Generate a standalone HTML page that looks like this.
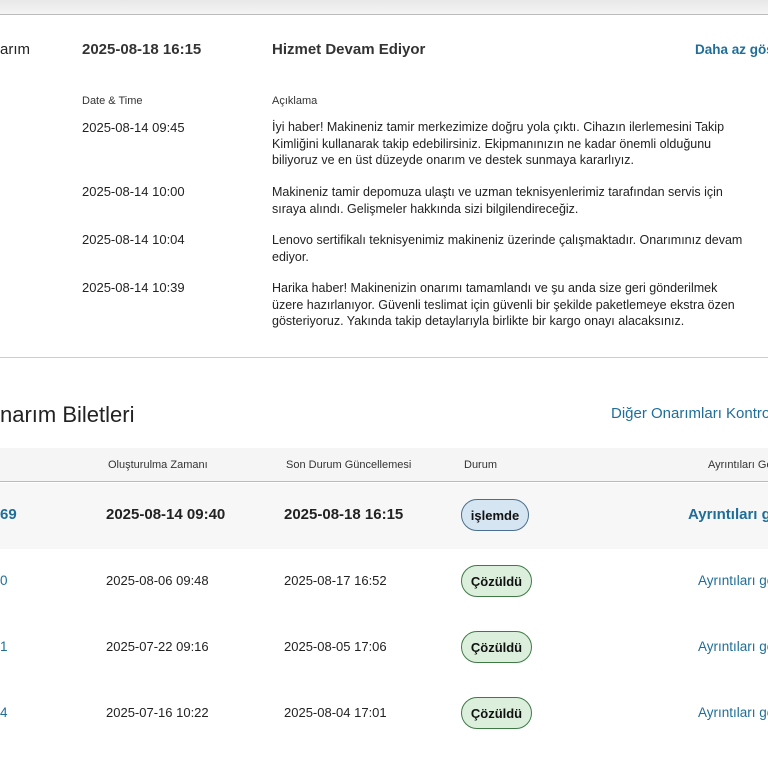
<!DOCTYPE html>
<html><head><meta charset="utf-8"><style>
*{margin:0;padding:0;box-sizing:border-box}
body{width:768px;height:768px;overflow:hidden;background:#fff;font-family:"Liberation Sans",sans-serif;color:#222;position:relative}
.a{position:absolute;white-space:nowrap}
.top{position:absolute;left:0;top:0;width:768px;height:15px;background:linear-gradient(#e8e8e8,#f4f4f4);border-bottom:1px solid #bbb}
.t13{font-size:13px;line-height:16px}
.sm{font-size:11px;color:#333}
.desc{position:absolute;left:272px;width:465px;font-size:12.5px;line-height:16.5px;color:#222;white-space:normal}
.link{color:#1f6e99}
.hr{position:absolute;left:0;width:768px;height:1px;background:#ccc}
.pill{position:absolute;height:32px;border-radius:16px;font-size:13px;font-weight:bold;display:flex;align-items:center;justify-content:center;color:#111}
</style></head><body>
<div class="top"></div>
<div class="a" style="left:0;top:41px;font-size:15px">arım</div>
<div class="a" style="left:82px;top:41px;font-size:15px;font-weight:bold;color:#333">2025-08-18 16:15</div>
<div class="a" style="left:272px;top:41px;font-size:15px;font-weight:bold;color:#333">Hizmet Devam Ediyor</div>
<div class="a link" style="left:695px;top:42px;font-size:13.5px;font-weight:bold">Daha az göster</div>
<div class="a sm" style="left:82px;top:95px">Date &amp; Time</div>
<div class="a sm" style="left:272px;top:95px">Açıklama</div>
<div class="a t13" style="left:82px;top:120px">2025-08-14 09:45</div>
<div class="desc" style="top:119px">İyi haber! Makineniz tamir merkezimize doğru yola çıktı. Cihazın ilerlemesini Takip Kimliğini kullanarak takip edebilirsiniz. Ekipmanınızın ne kadar önemli olduğunu biliyoruz ve en üst düzeyde onarım ve destek sunmaya kararlıyız.</div>
<div class="a t13" style="left:82px;top:184px">2025-08-14 10:00</div>
<div class="desc" style="top:184px">Makineniz tamir depomuza ulaştı ve uzman teknisyenlerimiz tarafından servis için sıraya alındı. Gelişmeler hakkında sizi bilgilendireceğiz.</div>
<div class="a t13" style="left:82px;top:232px">2025-08-14 10:04</div>
<div class="desc" style="top:232px;width:520px">Lenovo sertifikalı teknisyenimiz makineniz üzerinde çalışmaktadır. Onarımınız devam<br>ediyor.</div>
<div class="a t13" style="left:82px;top:280px">2025-08-14 10:39</div>
<div class="desc" style="top:280px">Harika haber! Makinenizin onarımı tamamlandı ve şu anda size geri gönderilmek üzere hazırlanıyor. Güvenli teslimat için güvenli bir şekilde paketlemeye ekstra özen gösteriyoruz. Yakında takip detaylarıyla birlikte bir kargo onayı alacaksınız.</div>
<div class="hr" style="top:357px"></div>
<div class="a" style="left:0;top:402px;font-size:22px;color:#222">narım Biletleri</div>
<div class="a link" style="left:611px;top:405px;font-size:15px">Diğer Onarımları Kontrol Et</div>
<div style="position:absolute;left:0;top:448px;width:768px;height:34px;background:#f5f5f5;border-bottom:1px solid #bbb"></div>
<div class="a sm" style="left:108px;top:459px">Oluşturulma Zamanı</div>
<div class="a sm" style="left:286px;top:459px">Son Durum Güncellemesi</div>
<div class="a sm" style="left:464px;top:459px">Durum</div>
<div class="a sm" style="left:708px;top:459px">Ayrıntıları Gör</div>
<div style="position:absolute;left:0;top:483px;width:768px;height:66px;background:#f7f7f7"></div>
<div class="a link" style="left:0;top:506px;font-size:15px;font-weight:bold">69</div>
<div class="a" style="left:106px;top:506px;font-size:15px;font-weight:bold">2025-08-14 09:40</div>
<div class="a" style="left:284px;top:506px;font-size:15px;font-weight:bold">2025-08-18 16:15</div>
<div class="pill" style="left:461px;top:499px;width:68px;background:#d6e5f2;border:1px solid #4a6f8e">işlemde</div>
<div class="a link" style="left:688px;top:506px;font-size:15px;font-weight:bold">Ayrıntıları gör</div>

<div class="a link" style="left:0;top:573px;font-size:13.5px">0</div>
<div class="a t13" style="left:106px;top:573px">2025-08-06 09:48</div>
<div class="a t13" style="left:284px;top:573px">2025-08-17 16:52</div>
<div class="pill" style="left:461px;top:565px;width:71px;background:#dcefdc;border:1px solid #3f7a45">Çözüldü</div>
<div class="a link" style="left:698px;top:573px;font-size:13.5px">Ayrıntıları gör</div>

<div class="a link" style="left:0;top:639px;font-size:13.5px">1</div>
<div class="a t13" style="left:106px;top:639px">2025-07-22 09:16</div>
<div class="a t13" style="left:284px;top:639px">2025-08-05 17:06</div>
<div class="pill" style="left:461px;top:631px;width:71px;background:#dcefdc;border:1px solid #3f7a45">Çözüldü</div>
<div class="a link" style="left:698px;top:639px;font-size:13.5px">Ayrıntıları gör</div>

<div class="a link" style="left:0;top:705px;font-size:13.5px">4</div>
<div class="a t13" style="left:106px;top:705px">2025-07-16 10:22</div>
<div class="a t13" style="left:284px;top:705px">2025-08-04 17:01</div>
<div class="pill" style="left:461px;top:697px;width:71px;background:#dcefdc;border:1px solid #3f7a45">Çözüldü</div>
<div class="a link" style="left:698px;top:705px;font-size:13.5px">Ayrıntıları gör</div>
</body></html>
